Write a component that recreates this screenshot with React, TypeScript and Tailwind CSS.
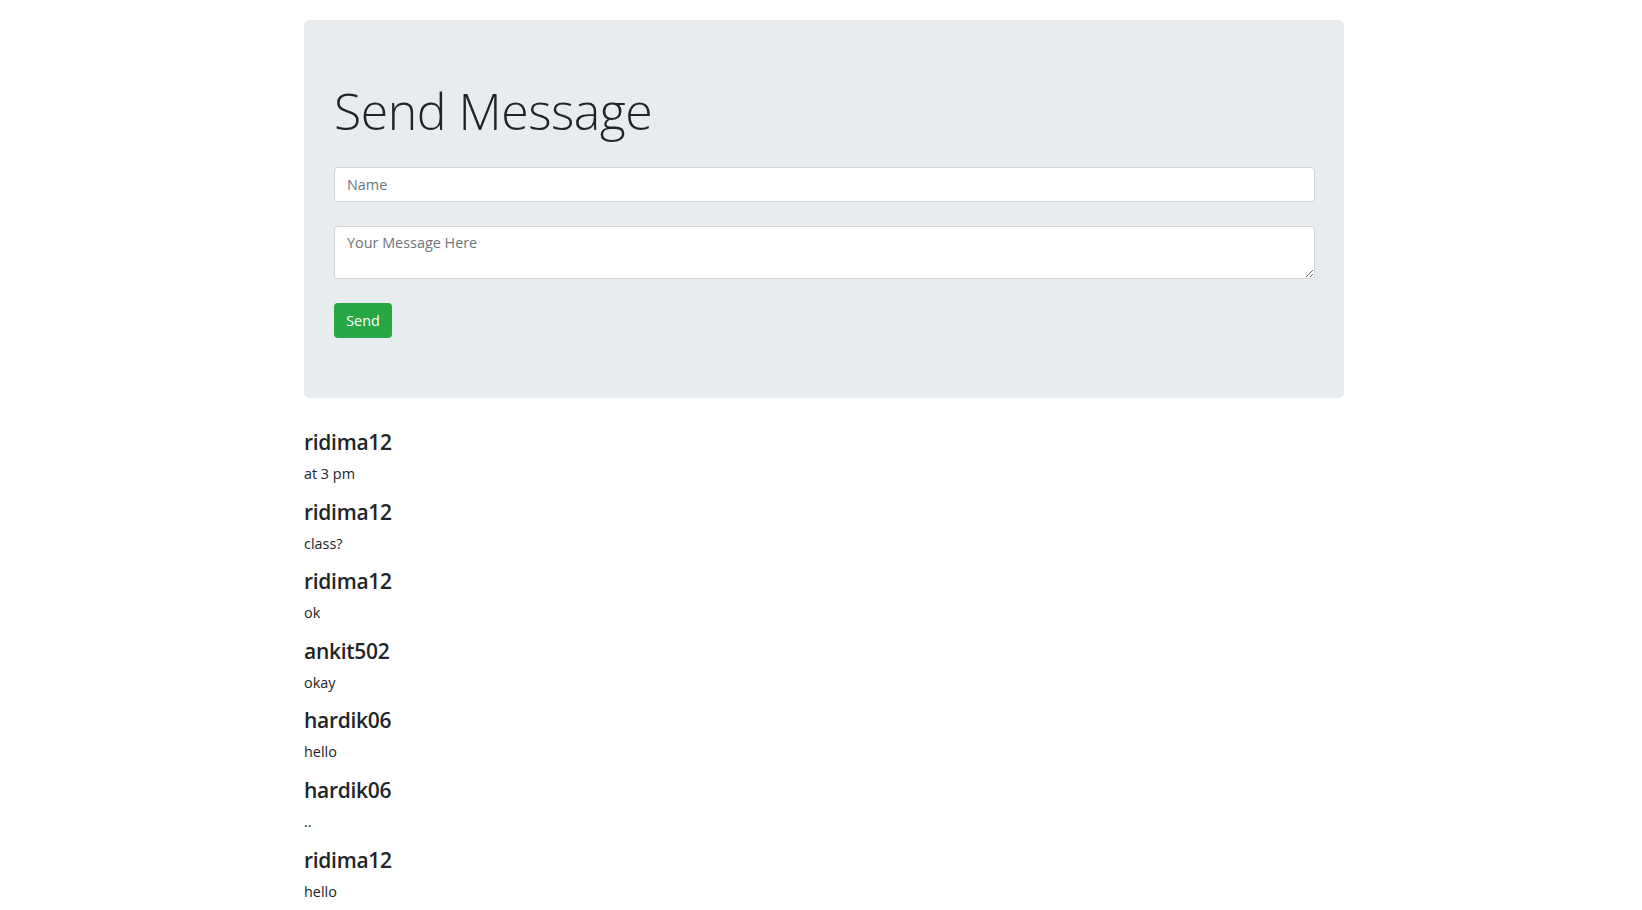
const messages = [
  { name: 'ridima12', text: 'at 3 pm' },
  { name: 'ridima12', text: 'class?' },
  { name: 'ridima12', text: 'ok' },
  { name: 'ankit502', text: 'okay' },
  { name: 'hardik06', text: 'hello' },
  { name: 'hardik06', text: '..' },
  { name: 'ridima12', text: 'hello' },
]

export default function App() {
  return (
    <div className="min-h-[910px] bg-white font-['Open_Sans',sans-serif] text-[#212529]">
      <div className="ml-[304px] w-[1040px] pt-[20px]">
        <div className="rounded-[5px] bg-[#e9ecef] px-[30px] pb-[60px] pt-[61px]">
          <h1 className="mb-[26px] text-[50px] font-light leading-[60px] tracking-[-0.5px]">
            Send Message
          </h1>
          <form className="w-[981px]" onSubmit={(e) => e.preventDefault()}>
            <input
              type="text"
              placeholder="Name"
              className="block h-[35px] w-full rounded-[4px] border border-[#ced4da] bg-white px-[12px] text-[14.4px] outline-none placeholder:text-[#6c757d]"
            />
            <textarea
              placeholder="Your Message Here"
              className="mt-[24px] block h-[53px] w-full rounded-[4px] border border-[#ced4da] bg-white px-[12px] py-[5px] text-[14.4px] leading-[21px] outline-none placeholder:text-[#6c757d]"
            />
            <button
              type="submit"
              className="mt-[24px] h-[35px] w-[58px] rounded-[4px] bg-[#28a745] text-[14.4px] text-white"
            >
              Send
            </button>
          </form>
        </div>

        <div className="mt-[31px]">
          {messages.map((m, i) => (
            <div key={i}>
              <h4 className="mb-[8px] text-[21px] font-semibold leading-[26px] tracking-[-0.3px]">
                {m.name}
              </h4>
              <p className="mb-[13.6px] text-[14.4px] leading-[22px]">{m.text}</p>
            </div>
          ))}
        </div>
      </div>
    </div>
  )
}
